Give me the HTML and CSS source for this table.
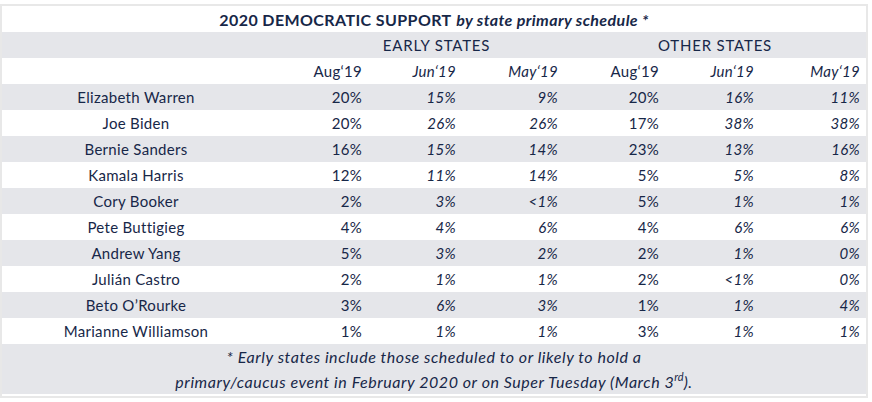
FILE: index.html
```html
<!DOCTYPE html>
<html lang="en">
<head>
<meta charset="utf-8">
<title>2020 Democratic Support</title>
<link rel="stylesheet" href="styles.css">
</head>
<body>
<div class="frame">
<table class="poll">
<colgroup>
<col class="c-name"><col class="c1"><col class="c2"><col class="c3"><col class="c4"><col class="c5"><col class="c6">
</colgroup>
<thead>
<tr class="title-row"><th colspan="7"><b>2020 DEMOCRATIC SUPPORT</b> <i>by state primary schedule *</i></th></tr>
<tr class="group-row alt"><th></th><th colspan="3" class="early">EARLY STATES</th><th colspan="3">OTHER STATES</th></tr>
<tr class="head-row"><th></th><th class="num">Aug‘19</th><th class="num it">Jun‘19</th><th class="num it">May‘19</th><th class="num">Aug‘19</th><th class="num it">Jun‘19</th><th class="num it">May‘19</th></tr>
</thead>
<tbody>
<tr class="alt"><td class="name">Elizabeth Warren</td><td class="num">20%</td><td class="num it">15%</td><td class="num it">9%</td><td class="num">20%</td><td class="num it">16%</td><td class="num it">11%</td></tr>
<tr><td class="name">Joe Biden</td><td class="num">20%</td><td class="num it">26%</td><td class="num it">26%</td><td class="num">17%</td><td class="num it">38%</td><td class="num it">38%</td></tr>
<tr class="alt"><td class="name">Bernie Sanders</td><td class="num">16%</td><td class="num it">15%</td><td class="num it">14%</td><td class="num">23%</td><td class="num it">13%</td><td class="num it">16%</td></tr>
<tr><td class="name">Kamala Harris</td><td class="num">12%</td><td class="num it">11%</td><td class="num it">14%</td><td class="num">5%</td><td class="num it">5%</td><td class="num it">8%</td></tr>
<tr class="alt"><td class="name">Cory Booker</td><td class="num">2%</td><td class="num it">3%</td><td class="num it">&lt;1%</td><td class="num">5%</td><td class="num it">1%</td><td class="num it">1%</td></tr>
<tr><td class="name">Pete Buttigieg</td><td class="num">4%</td><td class="num it">4%</td><td class="num it">6%</td><td class="num">4%</td><td class="num it">6%</td><td class="num it">6%</td></tr>
<tr class="alt"><td class="name">Andrew Yang</td><td class="num">5%</td><td class="num it">3%</td><td class="num it">2%</td><td class="num">2%</td><td class="num it">1%</td><td class="num it">0%</td></tr>
<tr><td class="name">Julián Castro</td><td class="num">2%</td><td class="num it">1%</td><td class="num it">1%</td><td class="num">2%</td><td class="num it">&lt;1%</td><td class="num it">0%</td></tr>
<tr class="alt"><td class="name">Beto O’Rourke</td><td class="num">3%</td><td class="num it">6%</td><td class="num it">3%</td><td class="num">1%</td><td class="num it">1%</td><td class="num it">4%</td></tr>
<tr><td class="name">Marianne Williamson</td><td class="num">1%</td><td class="num it">1%</td><td class="num it">1%</td><td class="num">3%</td><td class="num it">1%</td><td class="num it">1%</td></tr>
</tbody>
<tfoot>
<tr class="alt foot"><td colspan="7">* Early states include those scheduled to or likely to hold a<br>primary/caucus event in February 2020 or on Super Tuesday (March 3<sup>rd</sup>).</td></tr>
</tfoot>
</table>
</div>
</body>
</html>
```

FILE: styles.css
```css
html, body {
  margin: 0;
  padding: 0;
  background: #ffffff;
}
body {
  font-family: "Lato", "Open Sans", sans-serif;
  color: #172748;
  font-size: 15px;
}
.frame {
  margin-top: 4px;
  width: 868px;
  box-sizing: border-box;
  border: 2px solid #e8e8e8;
  padding-bottom: 2px;
}
.poll {
  width: 864px;
  border-collapse: collapse;
  table-layout: fixed;
}
.c-name { width: 268px; }
.c1 { width: 98px; }
.c2 { width: 94px; }
.c3 { width: 102px; }
.c4 { width: 101px; }
.c5 { width: 95px; }
.c6 { width: 106px; }
.poll th, .poll td {
  height: 26px;
  padding: 0;
  font-weight: normal;
  text-align: center;
  vertical-align: middle;
  white-space: nowrap;
  letter-spacing: 0.3px;
}
.alt { background: #e5e6ea; }
.title-row th {
  font-size: 16px;
  letter-spacing: 0.4px;
}
.title-row b { font-weight: 700; }
.title-row i { font-weight: 700; font-style: italic; }
.group-row th { letter-spacing: 0.8px; }
.group-row .early { padding-left: 39px; }
.poll .num { text-align: right; padding-right: 6px; }
.it { font-style: italic; }
.foot td {
  height: 50px;
  font-size: 16px;
  font-style: italic;
  line-height: 25px;
  letter-spacing: 0.55px;
}
.foot sup {
  font-size: 11px;
  line-height: 0;
  vertical-align: 7px;
  letter-spacing: 0;
}
```
